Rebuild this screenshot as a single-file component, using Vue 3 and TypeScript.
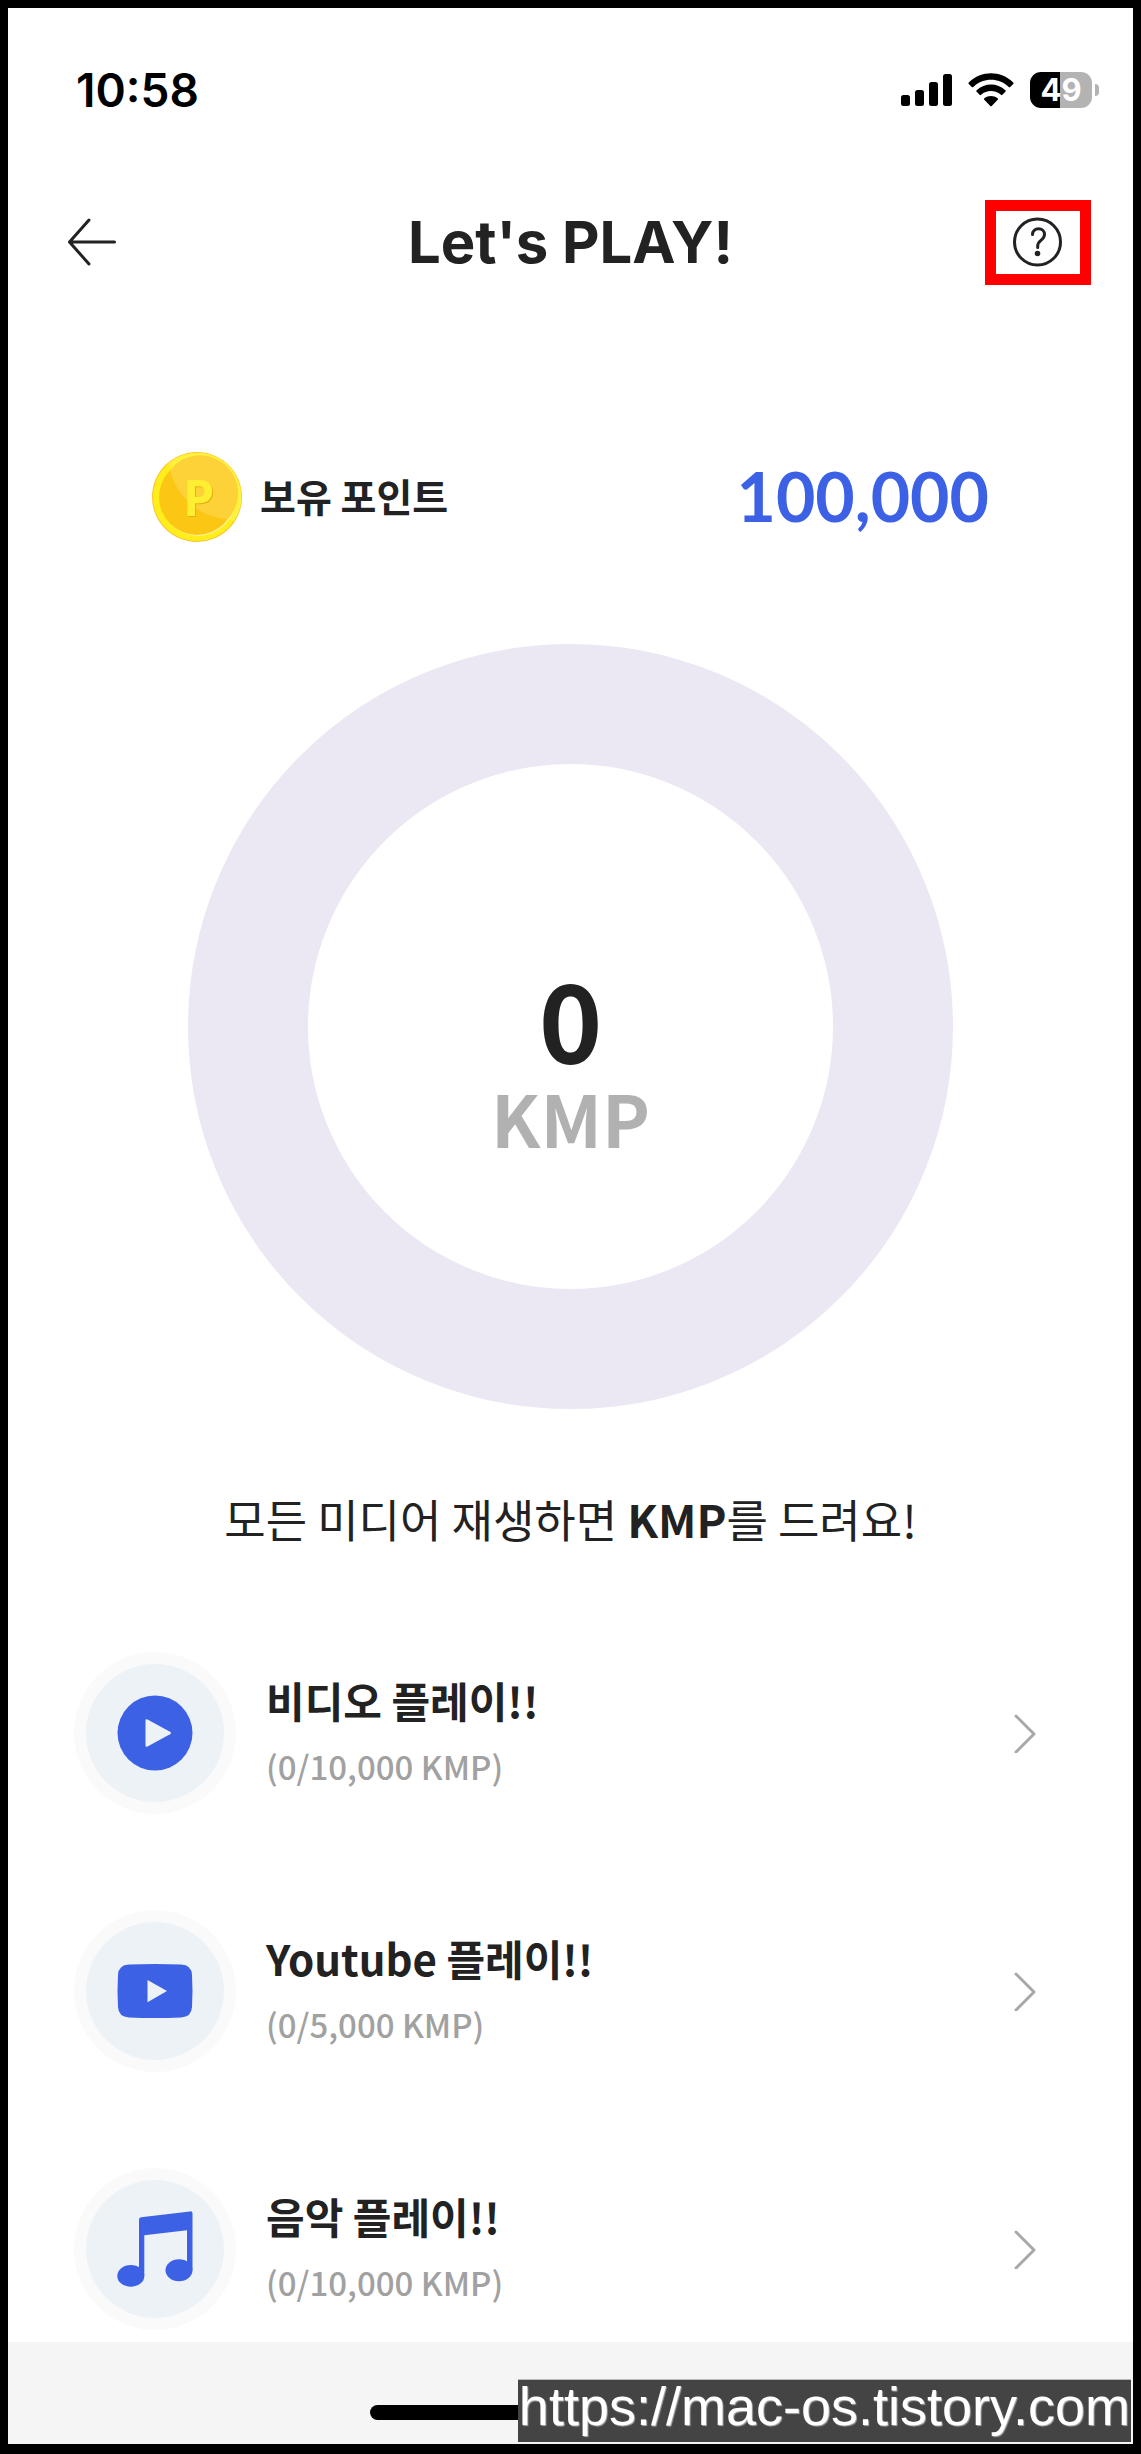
<script setup lang="ts">
interface PlayItem {
  id: 'video' | 'youtube' | 'music'
  title: string
  earned: number
  limit: number
}

const points = 100000
const earnedToday = 0

const items: PlayItem[] = [
  { id: 'video', title: '비디오 플레이!!', earned: 0, limit: 10000 },
  { id: 'youtube', title: 'Youtube 플레이!!', earned: 0, limit: 5000 },
  { id: 'music', title: '음악 플레이!!', earned: 0, limit: 10000 },
]

const format = (value: number): string => value.toLocaleString('en-US')
</script>

<template>
  <div class="screen">
    <div class="status">
      <span class="time">10:58</span>
      <div class="indicators">
        <svg class="signal" width="51" height="32" viewBox="0 0 51 32" aria-hidden="true">
          <rect x="0" y="21" width="9" height="11" rx="2.5" />
          <rect x="14" y="16" width="9" height="16" rx="2.5" />
          <rect x="28" y="8" width="9" height="24" rx="2.5" />
          <rect x="42" y="0" width="9" height="32" rx="2.5" />
        </svg>
        <svg class="wifi" width="46" height="34" viewBox="0 0 46 34" aria-hidden="true">
          <path d="M.8 9.4C13.2-2.8 32.8-2.8 45.2 9.4c.5.5.5 1 0 1.500l-3 3c-.5.5-1 .5-1.500 0C30.800 4.400 15.200 4.400 5.300 13.900c-.5.5-1 .5-1.500 0l-3-3c-.5-.5-.5-1 0-1.500z" />
          <path d="M8.600 17.300c8.100-7.600 20.700-7.600 28.800 0 .5.5.5 1 0 1.500l-3 3c-.5.5-1 .5-1.500 0-5.600-5-14.200-5-19.800 0-.5.5-1 .5-1.500 0l-3-3c-.5-.5-.5-1 0-1.500z" />
          <path d="M16.400 25.200c3.900-3 9.300-3 13.200 0 .6.5.6 1 .1 1.500l-6 6.200c-.5.5-.9.5-1.400 0l-6-6.200c-.5-.5-.5-1 .1-1.500z" />
        </svg>
        <div class="battery">
          <span class="level">49</span>
          <span class="tip"></span>
        </div>
      </div>
    </div>

    <header class="header">
      <button class="back" type="button" aria-label="뒤로">
        <svg width="50" height="50" viewBox="0 0 50 50" aria-hidden="true">
          <path d="M22 3 2.500 25 22 47M2.500 25H47.500" />
        </svg>
      </button>
      <h1>Let's PLAY!</h1>
      <button class="help" type="button" aria-label="도움말">
        <svg width="50" height="50" viewBox="0 0 50 50" aria-hidden="true">
          <circle cx="24.500" cy="25" r="23" />
          <path d="M19.500 17.500c0-3.500 2.600-5.800 6-5.800s6 2.400 6 5.700c0 3-1.700 4.400-3.600 6-2 1.600-3.200 2.900-3.200 5.600v1.500" />
          <circle class="dot" cx="24.500" cy="36.500" r="2.800" />
        </svg>
      </button>
    </header>

    <main>
      <section class="points">
        <svg class="coin" width="90" height="90" viewBox="0 0 90 90" aria-hidden="true">
          <circle cx="45" cy="45" r="45" fill="#fbc42a" />
          <circle cx="45" cy="45" r="44" fill="#ffee1c" />
          <path d="M17 11A44 44 0 0 1 82 69L70 63 24 30z" fill="#fff23c" />
          <circle cx="46" cy="46" r="38" fill="#fff19a" />
          <circle cx="45" cy="45" r="38" fill="#fbc714" />
          <path d="M18 18A38 38 0 1 1 76 67C49 66 25 46 18 18z" fill="#fdd238" />
          <text class="coin-shade" x="32" y="65">P</text>
          <text class="coin-letter" x="31" y="64">P</text>
        </svg>
        <span class="label">보유 포인트</span>
        <strong class="amount">{{ format(points) }}</strong>
      </section>

      <section class="gauge">
        <svg class="ring" viewBox="0 0 765 765" aria-hidden="true">
          <circle cx="382.500" cy="382.500" r="322.500" />
        </svg>
        <div class="reading">
          <strong class="value">{{ earnedToday }}</strong>
          <span class="unit">KMP</span>
        </div>
      </section>

      <p class="notice">모든 미디어 재생하면 <b>KMP</b>를 드려요!</p>

      <ul class="list">
        <li v-for="item in items" :key="item.id">
          <a class="row" :href="`#${item.id}`">
            <svg class="badge" width="162" height="162" viewBox="0 0 162 162" aria-hidden="true">
              <circle cx="81" cy="81" r="81" fill="#fafafa" />
              <circle cx="81" cy="81" r="69" fill="#ecf2f6" />
              <template v-if="item.id === 'video'">
                <circle class="mark" cx="81" cy="81" r="37.500" />
                <path class="cut" d="M71.500 68.500q0-2 2-1L96 79.800q2 1.200 0 2.400L73.500 94.500q-2 1-2-1z" />
              </template>
              <template v-else-if="item.id === 'youtube'">
                <path class="mark" d="M55 54.600q26-1.200 52 0 10.500.4 11 10.400 1 16 0 32-.5 10-11 10.400-26 1.200-52 0-10.500-.4-11-10.400-1-16 0-32 .5-10 11-10.400z" />
                <path class="cut" d="M73.500 70 93 81 73.500 92.300z" />
              </template>
              <template v-else>
                <path class="mark" d="M65 51.500q0-2 2-2.200L116 43.400q2.500-.3 2.500 2V102.300H113V62.300L70.300 67.300V108H65z" />
                <ellipse class="mark" cx="56.800" cy="107.900" rx="13.500" ry="10.800" />
                <ellipse class="mark" cx="105" cy="102.300" rx="13.500" ry="11" />
              </template>
            </svg>
            <span class="text">
              <span class="title">{{ item.title }}</span>
              <span class="sub">({{ format(item.earned) }}/{{ format(item.limit) }} KMP)</span>
            </span>
            <svg class="chevron" width="22" height="40" viewBox="0 0 22 40" aria-hidden="true">
              <path d="M2 3 20 21 2 39" />
            </svg>
          </a>
        </li>
      </ul>
    </main>

    <footer class="footer">
      <span class="home"></span>
      <a class="watermark" href="https://mac-os.tistory.com">https://mac-os.tistory.com</a>
    </footer>
  </div>
</template>

<style>
body {
  margin: 0;
}
</style>

<style scoped>
.screen {
  box-sizing: border-box;
  min-height: 100vh;
  display: flex;
  flex-direction: column;
  border: 8px solid #000;
  border-bottom-width: 10px;
  background: #fff;
  color: #222;
  font-family: "Noto Sans CJK KR", sans-serif;
}

.status {
  display: flex;
  align-items: center;
  justify-content: space-between;
  height: 164px;
  padding: 0 34px 0 68px;
  color: #000;
}

.time {
  font: 600 46px/54px Inter, sans-serif;
}

.indicators {
  display: flex;
  align-items: center;
  gap: 16px;
}

.battery {
  display: flex;
  align-items: center;
  gap: 3px;
}

.level {
  width: 62px;
  border-radius: 11px;
  background: linear-gradient(90deg, #000 30px, #b3b3b3 30px);
  color: #fff;
  font: 700 31px/36px Inter, sans-serif;
  text-align: center;
}

.tip {
  width: 4px;
  height: 12px;
  border-radius: 0 6px 6px 0;
  background: #b3b3b3;
}

.header {
  display: grid;
  grid-template-columns: 1fr auto 1fr;
  align-items: center;
  height: 140px;
  padding: 0 42px;
}

.header h1 {
  margin: 0;
  font: 700 58px/66px Inter, sans-serif;
}

button {
  display: flex;
  align-items: center;
  justify-content: center;
  padding: 0;
  border: 0;
  background: none;
}

.back svg,
.help svg,
.chevron {
  fill: none;
  stroke: #222;
  stroke-width: 3;
  stroke-linecap: round;
  stroke-linejoin: round;
}

.back {
  justify-self: start;
  padding: 0 17px;
}

.help {
  justify-self: end;
  box-sizing: border-box;
  width: 106px;
  height: 85px;
  border: 11px solid #f00;
}

.help .dot {
  fill: #222;
  stroke: none;
}

.points {
  display: flex;
  align-items: center;
  gap: 18px;
  margin-top: 140px;
  padding: 0 144px;
}

.coin text {
  font: 700 50px "Open Sans", sans-serif;
}

.coin-shade {
  fill: #e2b010;
}

.coin-letter {
  fill: #ffee32;
}

.label {
  padding-bottom: 4px;
  font-size: 39px;
  font-weight: 700;
  line-height: 58px;
}

.amount {
  margin-left: auto;
  padding-bottom: 2px;
  color: #3c61e5;
  font: 700 68px/80px Lato, sans-serif;
}

.gauge {
  display: grid;
  place-items: center;
  margin-top: 102px;
}

.ring,
.reading {
  grid-area: 1 / 1;
}

.ring {
  display: block;
  width: 68%;
  fill: none;
  stroke: #ebe8f4;
  stroke-width: 120;
}

.reading {
  display: flex;
  flex-direction: column;
  align-items: center;
  padding-top: 76px;
}

.value {
  font-size: 108px;
  line-height: 104px;
}

.unit {
  color: #b1b1b1;
  font-size: 72px;
  font-weight: 700;
  line-height: 98px;
}

.notice {
  margin: 78px 0 0;
  font-size: 45px;
  font-weight: 400;
  line-height: 64px;
  text-align: center;
}

.notice b {
  font-weight: 700;
}

.list {
  display: flex;
  flex-direction: column;
  gap: 96px;
  margin: 101px 0 0;
  padding: 0 97px 12px 66px;
  list-style: none;
}

.row {
  display: flex;
  align-items: center;
  color: inherit;
  text-decoration: none;
}

.mark {
  fill: #3c61e5;
}

.cut {
  fill: #ecf2f6;
}

.text {
  display: flex;
  flex: 1;
  flex-direction: column;
  margin-left: 30px;
}

.title {
  font-size: 42px;
  font-weight: 700;
  line-height: 66px;
}

.sub {
  color: #a1a1a1;
  font-size: 33px;
  font-weight: 500;
  line-height: 66px;
}

.chevron {
  stroke: #a8a8a8;
}

.footer {
  position: relative;
  display: flex;
  flex: 1;
  justify-content: center;
  min-height: 102px;
  background: #f5f5f5;
}

.home {
  width: 401px;
  height: 15px;
  margin-top: 63px;
  border-radius: 8px;
  background: #000;
}

.watermark {
  position: absolute;
  right: 2px;
  bottom: 2px;
  padding: 0 1px 10px;
  border-top: 1px solid #bbb;
  background: #444;
  color: #fff;
  font: 54px/52px "Liberation Sans", sans-serif;
  text-decoration: none;
  text-shadow: 1px 1px 1px #aaa;
}
</style>
